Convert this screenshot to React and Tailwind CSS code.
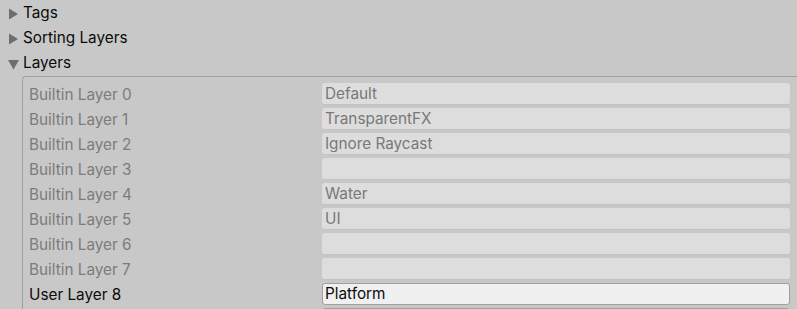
import React from "react";

function Tri({ open }) {
  return (
    <svg width="11" height="12" viewBox="0 0 11 12" className="shrink-0">
      {open ? (
        <polygon points="0,2 11,2 5.5,11.5" fill="#6e6e6e" />
      ) : (
        <polygon points="1,0.5 10,6 1,11.5" fill="#6e6e6e" />
      )}
    </svg>
  );
}

function Header({ label, open }) {
  return (
    <div className="h-[25px] flex items-center pl-[8px] pt-[2px]">
      <Tri open={open} />
      <span className="ml-[4px] text-[15.3px] text-[#0b0b0b]">{label}</span>
    </div>
  );
}

const rows = [
  ["Builtin Layer 0", "Default"],
  ["Builtin Layer 1", "TransparentFX"],
  ["Builtin Layer 2", "Ignore Raycast"],
  ["Builtin Layer 3", ""],
  ["Builtin Layer 4", "Water"],
  ["Builtin Layer 5", "UI"],
  ["Builtin Layer 6", ""],
  ["Builtin Layer 7", ""],
];

export default function App() {
  return (
    <div
      className="w-[797px] h-[309px] bg-[#c8c8c8] overflow-hidden"
      style={{ fontFamily: "Inter, 'Noto Sans', sans-serif" }}
    >
      <Header label="Tags" />
      <Header label="Sorting Layers" />
      <Header label="Layers" open />
      <div className="ml-[22px] mt-[1px] border-l border-t border-[#9f9f9f] rounded-tl-[4px] pt-[4px] pr-[7px]">
        {rows.map(([l, v]) => (
          <div key={l} className="h-[25px] flex items-center">
            <div className="w-[299px] pl-[6px] pt-[3px] text-[15.3px] text-[#7c7c7c]">{l}</div>
            <div className="flex-1 h-[22px] rounded-[3px] bg-[#dddddd] border-b border-[#c2c2c2] flex items-center pt-[3px] px-[3px] text-[15.3px] text-[#787878]">
              {v}
            </div>
          </div>
        ))}
        <div className="h-[25px] flex items-center">
          <div className="w-[299px] pl-[6px] pt-[3px] text-[15.3px] text-[#0b0b0b]">User Layer 8</div>
          <div className="flex-1 h-[22px] rounded-[3px] bg-[#f0f0f0] border border-[#a0a0a0] flex items-center pt-[2px] px-[2px] text-[15.3px] text-[#0b0b0b]">
            Platform
          </div>
        </div>
        <div className="h-[25px] flex items-center">
          <div className="w-[299px]" />
          <div className="flex-1 h-[22px] rounded-[3px] bg-[#f0f0f0] border border-[#a0a0a0]" />
        </div>
      </div>
    </div>
  );
}
